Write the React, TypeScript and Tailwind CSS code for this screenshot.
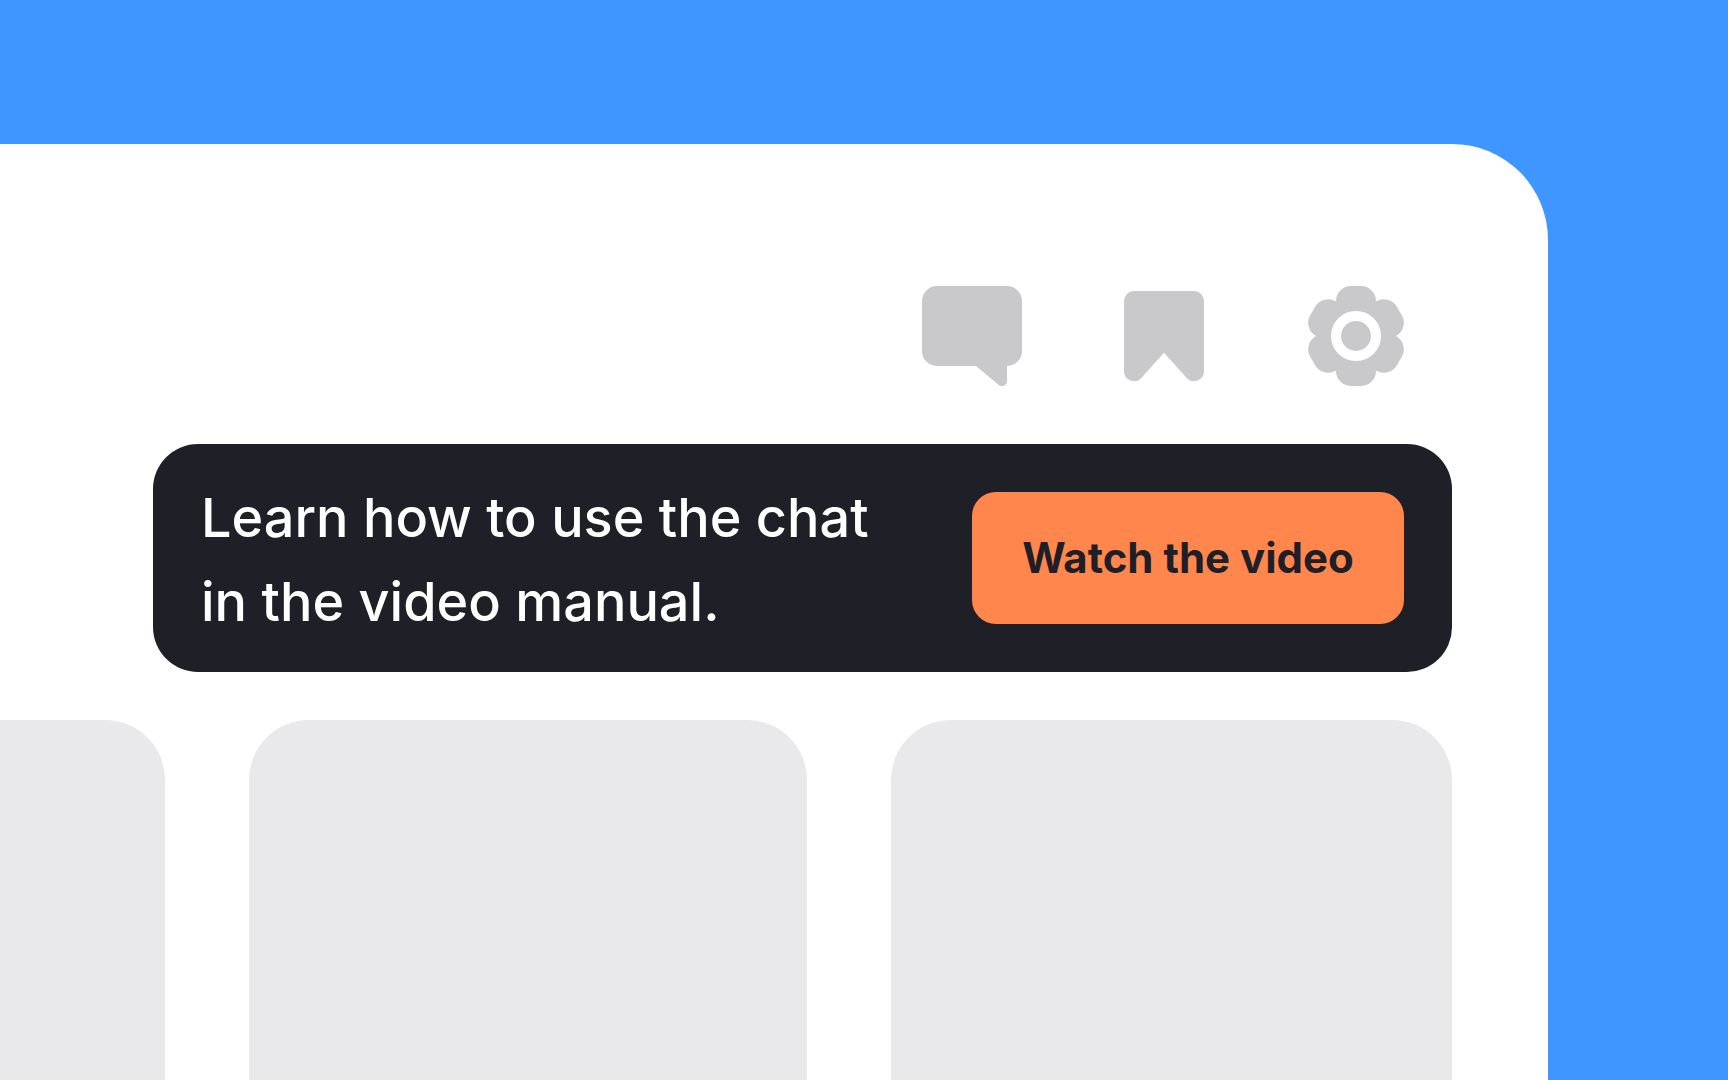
import React from 'react';

function ChatIcon() {
    return (
        <svg className="size-[120px]" viewBox="0 0 120 120" fill="currentColor" aria-hidden="true">
            <rect x="10" y="10" width="100" height="80" rx="15" />
            <path d="M64 90L86.8 108.9A5 5 0 0 0 95 105V89H64Z" />
        </svg>
    );
}

function BookmarkIcon() {
    return (
        <svg className="size-[120px]" viewBox="0 0 120 120" fill="currentColor" aria-hidden="true">
            <path d="M30 15H90A10 10 0 0 1 100 25V95A10 10 0 0 1 82.5 101.7L60 76.7L37.5 101.7A10 10 0 0 1 20 95V25A10 10 0 0 1 30 15Z" />
        </svg>
    );
}

function SettingsIcon() {
    return (
        <svg className="size-[120px]" viewBox="0 0 120 120" fill="currentColor" aria-hidden="true">
            <rect x="40" y="10" width="40" height="100" rx="15" />
            <rect x="40" y="10" width="40" height="100" rx="15" transform="rotate(60 60 60)" />
            <rect x="40" y="10" width="40" height="100" rx="15" transform="rotate(120 60 60)" />
            <circle cx="60" cy="60" r="20" fill="none" stroke="#fff" strokeWidth="10" />
        </svg>
    );
}

function Toolbar() {
    return (
        <nav className="flex justify-end gap-[72px] pr-9 text-[#c9c9cb]">
            <button type="button" aria-label="Chat">
                <ChatIcon />
            </button>
            <button type="button" aria-label="Bookmarks">
                <BookmarkIcon />
            </button>
            <button type="button" aria-label="Settings">
                <SettingsIcon />
            </button>
        </nav>
    );
}

function VideoBanner() {
    return (
        <section className="ml-[153px] flex items-center justify-between rounded-[45px] bg-[#1f1f28] px-12">
            <p className="pt-8 pb-7 text-[54px] leading-[84px] font-medium text-white">
                Learn how to use the chat
                <br />
                in the video manual.
            </p>
            <button
                type="button"
                className="h-[132px] w-[432px] rounded-3xl bg-[#ff864c] pb-0.5 text-[42px] font-bold text-[#1f1f28]"
            >
                Watch the video
            </button>
        </section>
    );
}

function App() {
    return (
        <div className="flex min-h-screen flex-col bg-[#3f96ff] pt-36 pr-[180px] font-['Inter',sans-serif]">
            <main className="flex flex-1 flex-col gap-12 rounded-tr-[96px] bg-white pt-[132px] pr-24">
                <Toolbar />
                <VideoBanner />
                <div className="grid flex-1 grid-cols-[165fr_558fr_561fr] gap-[84px]">
                    <div className="rounded-tr-[60px] bg-[#e9e9eb]" />
                    <div className="rounded-t-[60px] bg-[#e9e9eb]" />
                    <div className="rounded-t-[60px] bg-[#e9e9eb]" />
                </div>
            </main>
        </div>
    );
}

export default App;
